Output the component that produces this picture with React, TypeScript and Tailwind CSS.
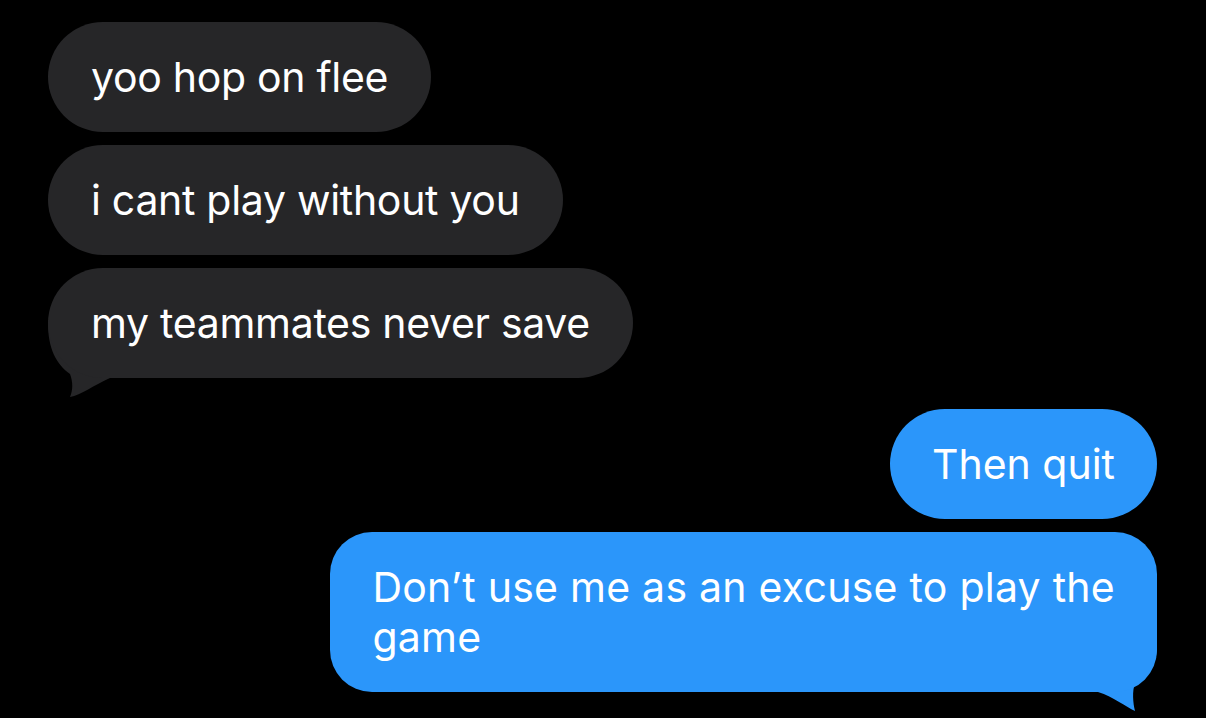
import React from "react";

const font = { fontFamily: "Inter, 'Noto Sans', sans-serif" };

function Gray({ text, tail }: { text: string; tail?: boolean }) {
  return (
    <div className="relative">
      {tail && (
        <svg
          className="absolute left-0 bottom-[-22px]"
          width="70"
          height="80"
          viewBox="0 0 70 80"
        >
          <path
            d="M0 0 L0 3 C0 28 8 44 22 54 C25 62 25 70 22 77 C33 75 46 65 62 58 L62 0 Z"
            fill="#262628"
          />
        </svg>
      )}
      <div className="relative rounded-[55px] bg-[#262628] px-[43px] py-[30px] text-[41px] leading-[50px] tracking-[-0.3px] text-white">
        {text}
      </div>
    </div>
  );
}

function Blue({ text, tail, cls }: { text: React.ReactNode; tail?: boolean; cls: string }) {
  return (
    <div className="relative">
      {tail && (
        <svg
          className="absolute right-0 bottom-[-19px]"
          width="67"
          height="82"
          viewBox="0 0 67 82"
        >
          <path
            d="M67 0 L67 18 C67 36 57 48 45 54 C42 62 43 74 45 82 C36 78 24 68 8 63 L0 63 L0 0 Z"
            fill="#2B96FA"
          />
        </svg>
      )}
      <div className={`relative bg-[#2B96FA] px-[42px] py-[30px] text-[41px] leading-[50px] text-white ${cls}`}>
        {text}
      </div>
    </div>
  );
}

export default function App() {
  return (
    <div className="h-[718px] w-[1206px] overflow-hidden bg-black pl-[48px] pr-[49px] pt-[22px]" style={font}>
      <div className="flex flex-col items-start gap-[13px]">
        <Gray text="yoo hop on flee" />
        <Gray text="i cant play without you" />
        <Gray text="my teammates never save" tail />
      </div>
      <div className="mt-[31px] flex flex-col items-end gap-[13px]">
        <Blue text="Then quit" cls="rounded-[55px]" />
        <Blue
          text={
            <>
              Don’t use me as an excuse to play the
              <br />
              game
            </>
          }
          tail
          cls="rounded-[42px] tracking-[0.25px]"
        />
      </div>
    </div>
  );
}
